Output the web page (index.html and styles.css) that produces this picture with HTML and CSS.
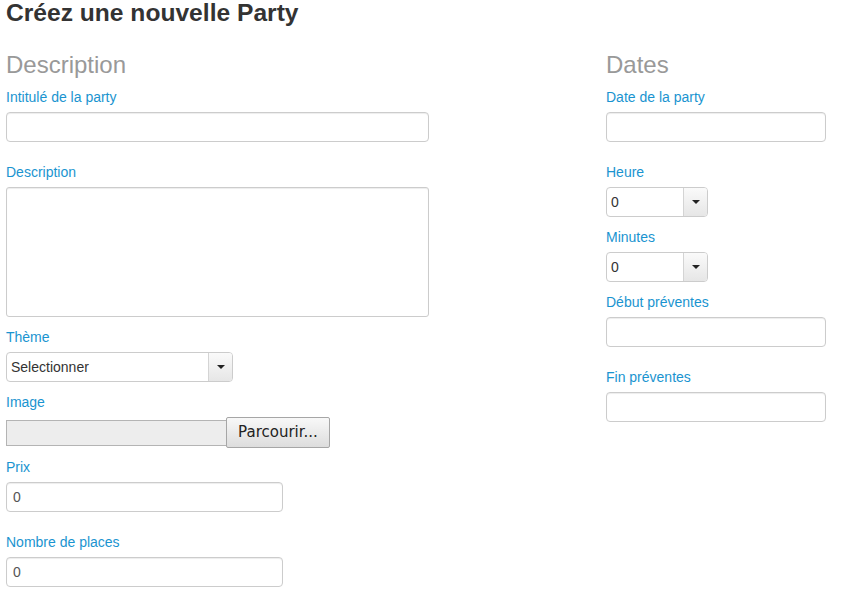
FILE: index.html
```html
<!DOCTYPE html>
<html lang="fr">
<head>
<meta charset="utf-8">
<title>Créez une nouvelle Party</title>
<link rel="stylesheet" href="styles.css">
</head>
<body>
<h1 class="title">Créez une nouvelle Party</h1>
<form class="layout">
  <div class="col col-left">
    <h2 class="section">Description</h2>
    <label class="lbl">Intitulé de la party</label>
    <input class="txt w-wide gap-l" type="text">
    <label class="lbl">Description</label>
    <textarea class="area w-wide gap-s"></textarea>
    <label class="lbl">Thème</label>
    <div class="select w-theme gap-s"><span class="sel-text">Selectionner</span><span class="sel-btn"><i class="caret"></i></span></div>
    <label class="lbl">Image</label>
    <div class="file gap-f"><span class="file-box"></span><span class="file-btn">Parcourir...</span></div>
    <label class="lbl">Prix</label>
    <input class="txt w-mid gap-l" type="text" value="0">
    <label class="lbl">Nombre de places</label>
    <input class="txt w-mid" type="text" value="0">
  </div>
  <div class="col col-right">
    <h2 class="section">Dates</h2>
    <label class="lbl">Date de la party</label>
    <input class="txt w-date gap-l" type="text">
    <label class="lbl">Heure</label>
    <div class="select w-time gap-s"><span class="sel-text">0</span><span class="sel-btn"><i class="caret"></i></span></div>
    <label class="lbl">Minutes</label>
    <div class="select w-time gap-s"><span class="sel-text">0</span><span class="sel-btn"><i class="caret"></i></span></div>
    <label class="lbl">Début préventes</label>
    <input class="txt w-date gap-l" type="text">
    <label class="lbl">Fin préventes</label>
    <input class="txt w-date" type="text">
  </div>
</form>
</body>
</html>
```
FILE: styles.css
```css
* { box-sizing: border-box; }
html, body { margin: 0; padding: 0; background: #fff; }
body {
  font-family: "Liberation Sans", Arial, sans-serif;
  color: #333;
  padding: 0 0 0 6px;
}
.title {
  margin: 0;
  font-size: 24.6px;
  line-height: 26px;
  font-weight: bold;
  color: #333;
}
.layout {
  display: grid;
  grid-template-columns: 600px 1fr;
  margin-top: 24px;
}
.col { display: flex; flex-direction: column; align-items: flex-start; }
.section {
  margin: 0 0 8px 0;
  font-size: 24px;
  line-height: 30px;
  font-weight: normal;
  color: #999;
}
.lbl {
  display: block;
  font-size: 14px;
  line-height: 18px;
  color: #1a94d0;
  margin-bottom: 6px;
}
.txt, .area {
  display: block;
  height: 30px;
  margin: 0;
  border: 1px solid #ccc;
  border-radius: 4px;
  box-shadow: inset 0 1px 1px rgba(0,0,0,0.075);
  padding: 0 6px;
  font-family: "Liberation Sans", Arial, sans-serif;
  font-size: 14px;
  color: #555;
  background: #fff;
  outline: none;
}
.area { height: 130px; resize: none; border-radius: 3px; }
.w-wide { width: 423px; }
.w-mid { width: 277px; }
.w-date { width: 220px; }
.w-theme { width: 227px; }
.w-time { width: 102px; }
.gap-l { margin-bottom: 21px; }
.gap-s { margin-bottom: 11px; }
.gap-f { margin-bottom: 10px; }

.select {
  display: flex;
  height: 30px;
  border: 1px solid #ccc;
  border-radius: 4px;
  background: #fff;
  overflow: hidden;
}
.sel-text {
  flex: 1;
  font-size: 14px;
  line-height: 28px;
  color: #333;
  padding-left: 4px;
}
.sel-btn {
  width: 24px;
  border-left: 1px solid #d4d4d4;
  background: linear-gradient(#fafafa, #e6e6e6);
  display: flex;
  align-items: center;
  justify-content: center;
}
.caret {
  display: block;
  width: 0; height: 0;
  border-left: 4px solid transparent;
  border-right: 4px solid transparent;
  border-top: 4px solid #222;
  margin-top: -1px;
}

.file { display: flex; align-items: center; height: 31px; }
.file-box {
  display: block;
  width: 220px;
  height: 26px;
  background: #ededed;
  border: 1px solid #b4b4b4;
  border-right: none;
}
.file-btn {
  display: block;
  width: 104px;
  height: 31px;
  border: 1px solid #a6a6a6;
  border-radius: 2px;
  background: linear-gradient(#f8f8f8, #dddddd);
  font-family: "DejaVu Sans", sans-serif;
  font-size: 15px;
  line-height: 29px;
  color: #222;
  text-align: center;
}
```
